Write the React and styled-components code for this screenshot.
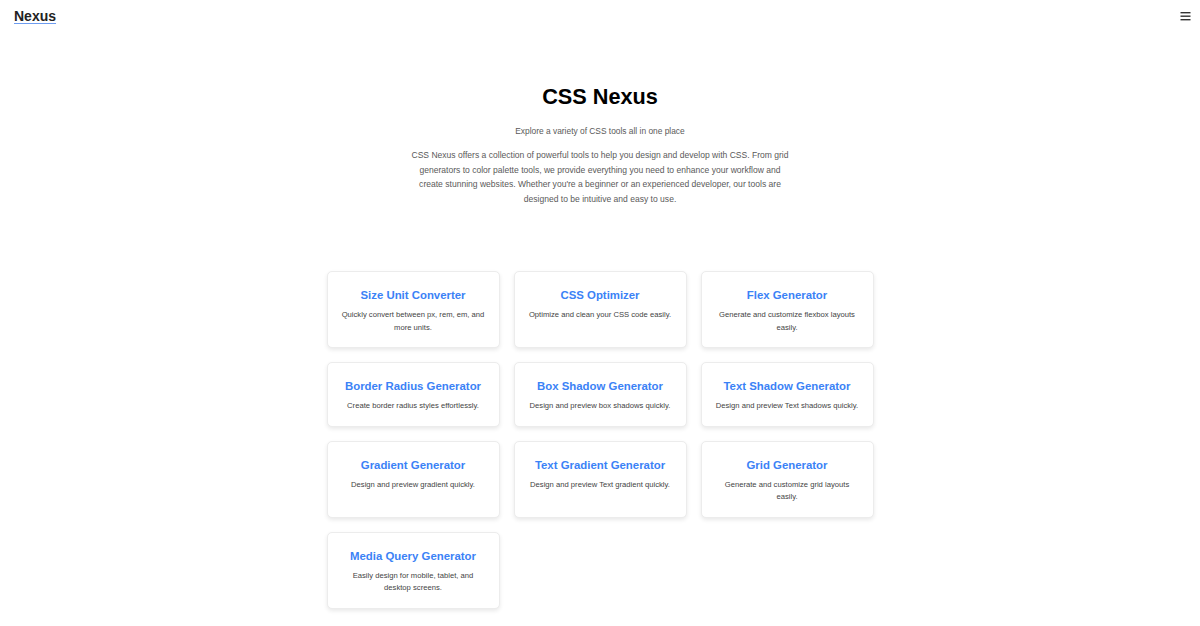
import React from "react";
import styled, { createGlobalStyle } from "styled-components";

const Global = createGlobalStyle`
  html, body { margin: 0; padding: 0; background: #fff; }
  body { font-family: "Liberation Sans", Arial, sans-serif; color: #222; }
  * { box-sizing: border-box; }
`;

const Nav = styled.nav`
  display: flex;
  align-items: center;
  justify-content: space-between;
  height: 32px;
  padding: 0 9px 0 14px;
`;

const Logo = styled.a`
  font-size: 14px;
  font-weight: 700;
  color: #222;
  text-decoration: underline;
  text-decoration-color: #6d9cf0;
  text-underline-offset: 2px;
  text-decoration-thickness: 1px;
  line-height: 16px;
  margin-top: -1px;
`;

const Burger = styled.button`
  border: 0;
  background: none;
  padding: 0;
  display: flex;
  width: 12px;
  height: 12px;
  align-items: center;
  justify-content: center;
  margin-top: -1px;
`;

const Hero = styled.section`
  display: flex;
  flex-direction: column;
  align-items: center;
  text-align: center;
  padding-top: 52px;
`;

const Heading = styled.h1`
  margin: 0;
  font-size: 21.7px;
  line-height: 26px;
  font-weight: 700;
  color: #000;
`;

const Sub = styled.p`
  margin: 15px 0 0;
  font-size: 8.4px;
  line-height: 12px;
  color: #5a5a5a;
`;

const Para = styled.p`
  margin: 11px 0 0;
  width: 383px;
  font-size: 8.55px;
  line-height: 14.5px;
  color: #5a5a5a;
`;

const Grid = styled.div`
  display: grid;
  grid-template-columns: repeat(3, 173px);
  gap: 14px;
  justify-content: center;
  margin-top: 65px;
  padding-bottom: 20px;
`;

const Card = styled.a`
  display: flex;
  flex-direction: column;
  align-items: center;
  text-align: center;
  padding: 16px 13.5px 13px;
  background: #fff;
  border: 1px solid #ececec;
  border-radius: 5px;
  box-shadow: 0 2px 4px rgba(0, 0, 0, 0.09);
  text-decoration: none;
`;

const CardTitle = styled.h2`
  margin: 0;
  font-size: 11.4px;
  line-height: 14px;
  font-weight: 700;
  color: #3b82f6;
`;

const CardDesc = styled.p`
  margin: 7px 0 0;
  font-size: 7.65px;
  line-height: 12.5px;
  color: #444;
`;

const tools = [
  ["Size Unit Converter", "Quickly convert between px, rem, em, and more units."],
  ["CSS Optimizer", "Optimize and clean your CSS code easily."],
  ["Flex Generator", "Generate and customize flexbox layouts easily."],
  ["Border Radius Generator", "Create border radius styles effortlessly."],
  ["Box Shadow Generator", "Design and preview box shadows quickly."],
  ["Text Shadow Generator", "Design and preview Text shadows quickly."],
  ["Gradient Generator", "Design and preview gradient quickly."],
  ["Text Gradient Generator", "Design and preview Text gradient quickly."],
  ["Grid Generator", "Generate and customize grid layouts easily."],
  ["Media Query Generator", "Easily design for mobile, tablet, and desktop screens."],
];

export default function App() {
  return (
    <>
      <Global />
      <Nav>
        <Logo href="#">Nexus</Logo>
        <Burger aria-label="menu">
          <svg width="11" height="10" viewBox="0 0 11 10">
            <rect x="0.5" y="1" width="10" height="1.4" fill="#333" />
            <rect x="0.5" y="4.5" width="10" height="1.4" fill="#333" />
            <rect x="0.5" y="8" width="10" height="1.4" fill="#333" />
          </svg>
        </Burger>
      </Nav>
      <Hero>
        <Heading>CSS Nexus</Heading>
        <Sub>Explore a variety of CSS tools all in one place</Sub>
        <Para>
          CSS Nexus offers a collection of powerful tools to help you design and develop with CSS. From grid
          generators to color palette tools, we provide everything you need to enhance your workflow and create
          stunning websites. Whether you're a beginner or an experienced developer, our tools are designed to be
          intuitive and easy to use.
        </Para>
      </Hero>
      <Grid>
        {tools.map(([t, d]) => (
          <Card key={t} href="#">
            <CardTitle>{t}</CardTitle>
            <CardDesc>{d}</CardDesc>
          </Card>
        ))}
      </Grid>
    </>
  );
}
